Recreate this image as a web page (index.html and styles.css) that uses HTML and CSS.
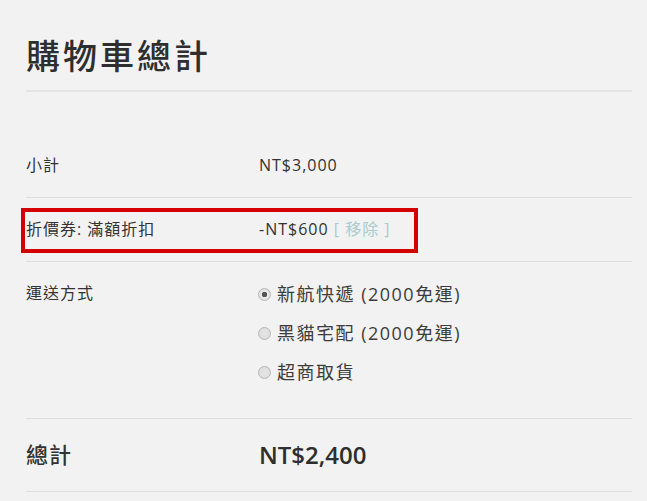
FILE: index.html
```html
<!DOCTYPE html>
<html lang="zh-Hant">
<head>
  <meta charset="UTF-8" />
  <meta name="viewport" content="width=device-width, initial-scale=1.0"/>
  <title>購物車總計</title>
  <link rel="stylesheet" href="styles.css">
</head>
<body>

  <div class="cart-totals">
    <h2>購物車總計</h2>

    <div class="totals">
      <!-- Subtotal -->
      <div class="row">
        <div class="label">小計</div>
        <div class="value">NT$3,000</div>
      </div>

      <!-- Coupon -->
      <div class="row coupon">
        <div class="label">折價券: 滿額折扣</div>
        <div class="value">-NT$600 <a href="#" class="remove">[ 移除 ]</a></div>
        <span class="highlight"></span>
      </div>

      <!-- Shipping -->
      <div class="row">
        <div class="label">運送方式</div>
        <ul class="shipping">
          <li><label><input type="radio" name="ship" checked> 新航快遞 (2000免運)</label></li>
          <li><label><input type="radio" name="ship"> 黑貓宅配 (2000免運)</label></li>
          <li><label><input type="radio" name="ship"> 超商取貨</label></li>
        </ul>
      </div>

      <!-- Total -->
      <div class="row total">
        <div class="label">總計</div>
        <div class="value">NT$2,400</div>
      </div>
    </div>
  </div>

</body>
</html>
```

FILE: styles.css
```css
body {
  font-family: 'Open Sans', 'Noto Sans CJK TC', sans-serif;
  background: #f2f2f2;
  color: #333;
  margin: 0;
  padding: 0;
}

.cart-totals {
  padding: 0 15px 0 26px;
}

.cart-totals h2 {
  margin: 34px 0 0;
  padding-bottom: 12px;
  font-size: 34px;
  line-height: 44px;
  font-weight: 500;
  letter-spacing: 3px;
  color: #2e2e2e;
  border-bottom: 2px solid #e4e4e4;
}

.totals {
  margin-top: 42px;
}

.row {
  display: grid;
  grid-template-columns: 233px 1fr;
  padding: 20px 0;
  border-bottom: 1px solid #dedede;
  font-size: 16px;
  line-height: 23px;
  letter-spacing: 1px;
}

.coupon {
  position: relative;
}

.highlight {
  position: absolute;
  left: -5px;
  top: 10px;
  width: 397px;
  height: 45px;
  box-sizing: border-box;
  border: 4px solid #d40000;
}

.remove {
  color: #abcbcd;
  text-decoration: none;
}

.shipping {
  list-style: none;
  margin: 0 0 14px;
  padding: 0;
}

.shipping li {
  font-size: 18px;
  line-height: 24px;
  letter-spacing: 1.5px;
  margin-bottom: 15px;
  color: #3c3c3c;
}

.shipping li:last-child {
  margin-bottom: 0;
}

.shipping label {
  display: flex;
  align-items: center;
  gap: 6px;
}

.shipping input {
  appearance: none;
  width: 13px;
  height: 13px;
  margin: 0 0 0 -1px;
  border: 1px solid #b5b5b5;
  border-radius: 50%;
  background: radial-gradient(circle, #e4e4e4 0, #dcdcdc 100%);
}

.shipping input:checked {
  background: radial-gradient(circle, #555 0, #555 2.5px, #e8e8e8 3px, #dcdcdc 100%);
}

.total {
  font-size: 22px;
  line-height: 31px;
  padding: 20px 0 21px;
}

.total .label {
  font-weight: 500;
}

.total .value {
  font-size: 24px;
  font-weight: 600;
  letter-spacing: 0;
  color: #2e2e2e;
}
```
